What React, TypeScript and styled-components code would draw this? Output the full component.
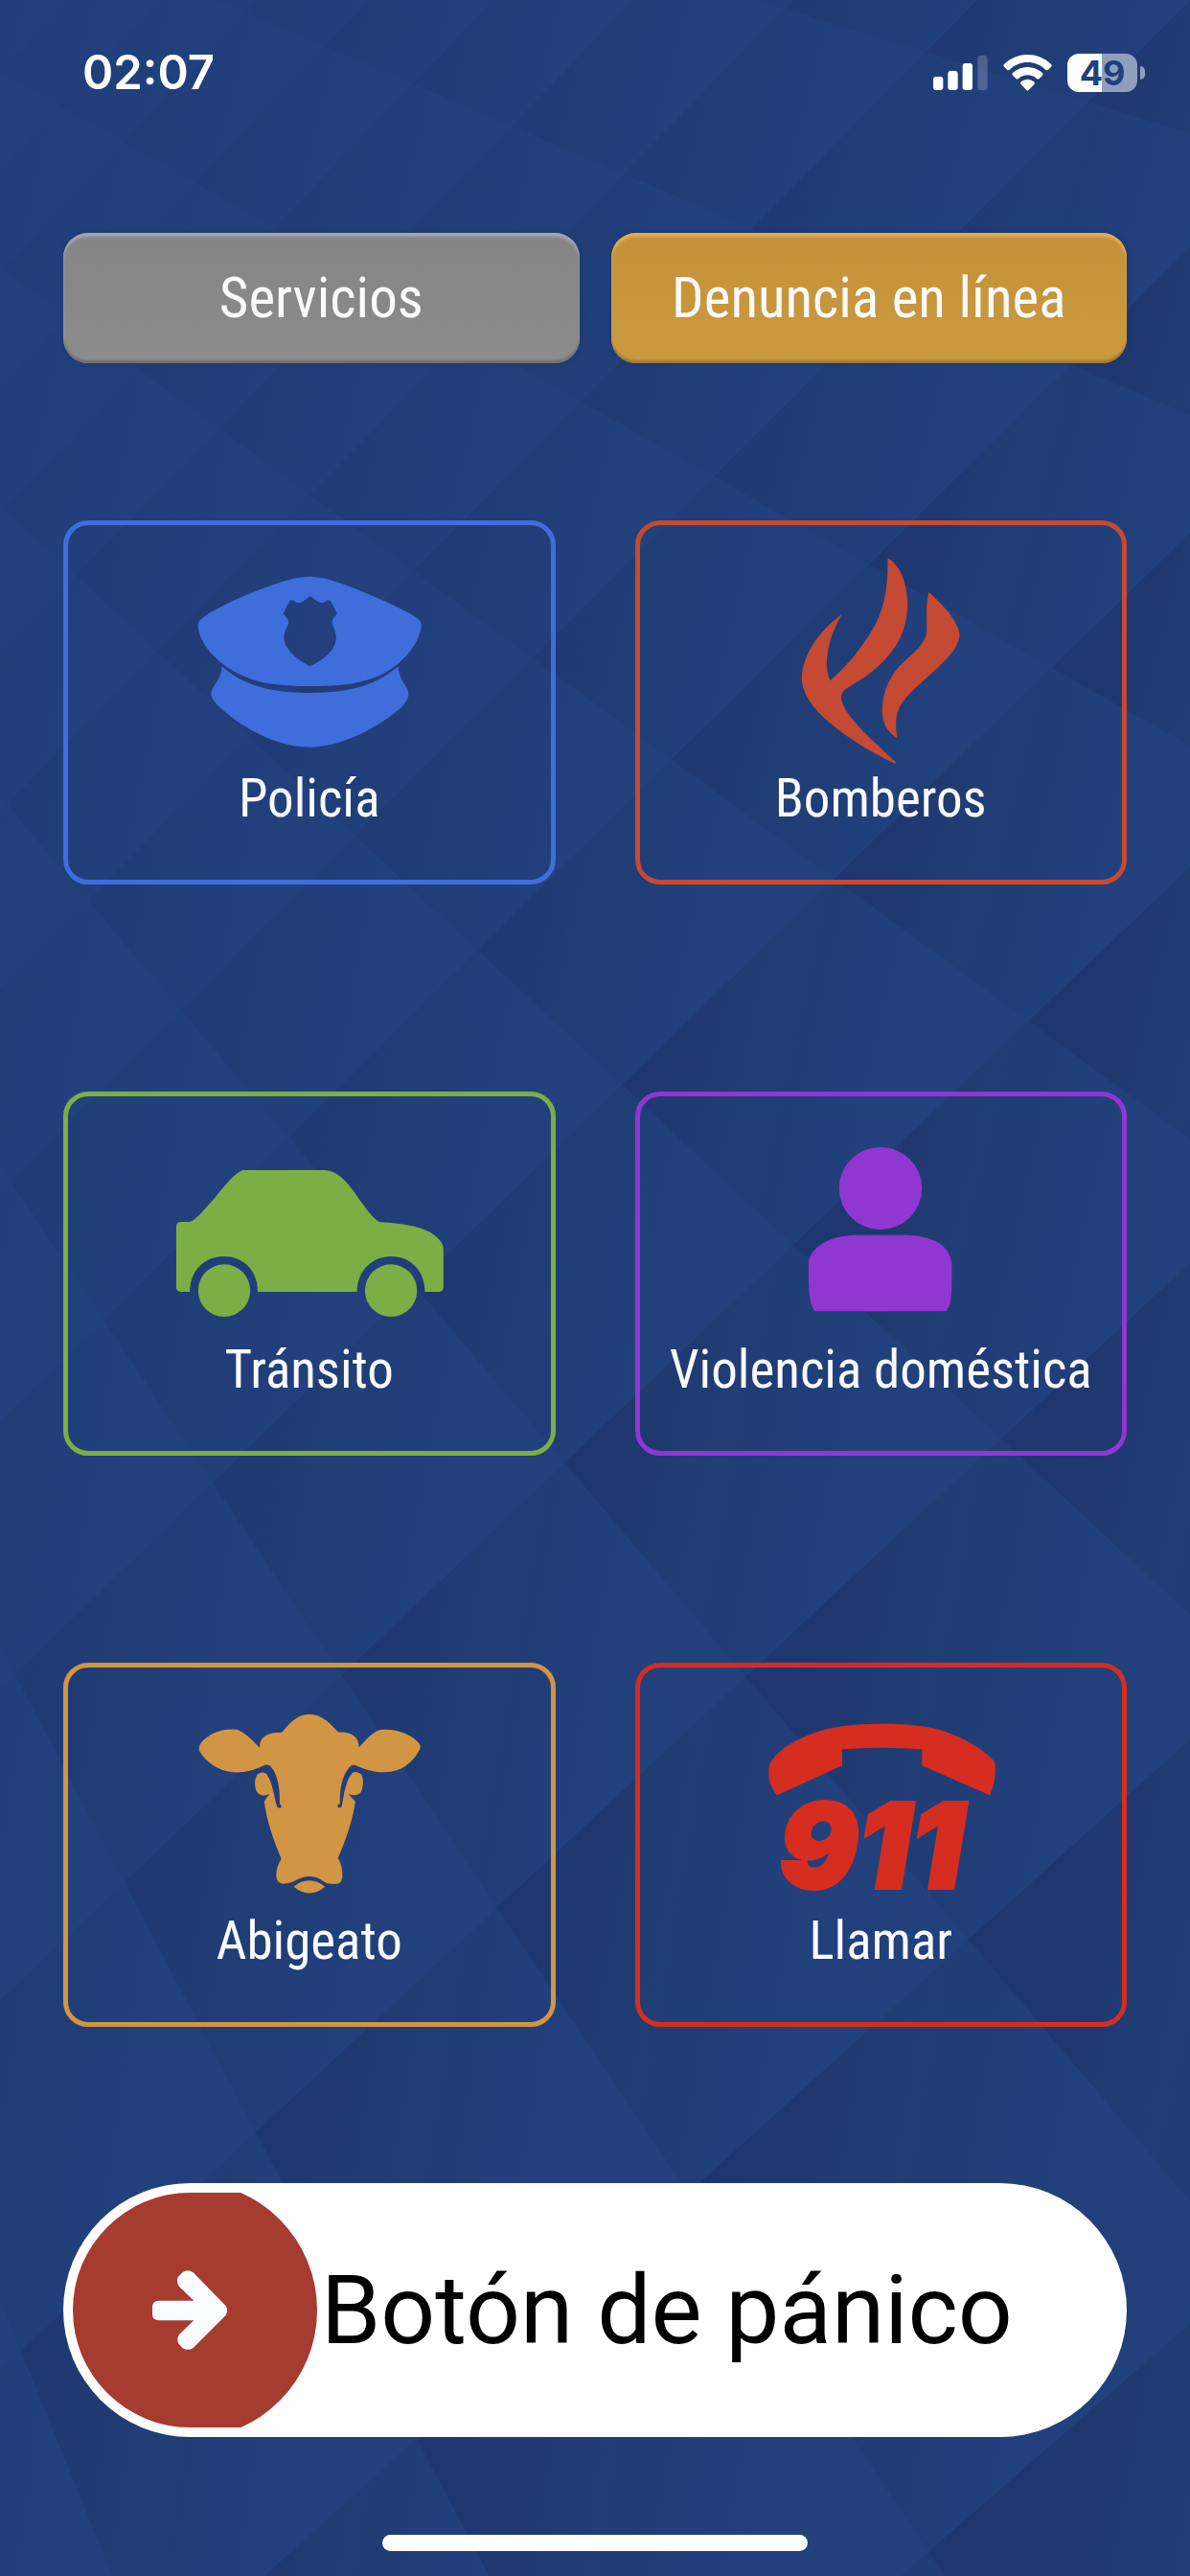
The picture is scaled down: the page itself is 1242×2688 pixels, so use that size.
import React from "react";
import styled, { createGlobalStyle } from "styled-components";

const Global = createGlobalStyle`
  *, *::before, *::after { box-sizing: border-box; }
  body { margin: 0; background: #21407c; }
  button { font: inherit; border: 0; margin: 0; padding: 0; cursor: pointer; }
`;

const Screen = styled.div`
  position: relative;
  isolation: isolate;
  min-height: 100vh;
  display: flex;
  flex-direction: column;
  font-family: "Roboto Condensed", Roboto, "Liberation Sans", sans-serif;
  overflow: hidden;
`;

const Backdrop = styled.svg`
  position: absolute;
  inset: 0;
  width: 100%;
  height: 100%;
  z-index: -1;
`;

const StatusBar = styled.header`
  height: 152px;
  padding: 0 47px 0 86px;
  display: flex;
  align-items: center;
  justify-content: space-between;
  color: #fff;
  font-family: Inter, "Liberation Sans", sans-serif;
`;

const Clock = styled.time`
  font-size: 49px;
  line-height: 60px;
  font-weight: 600;
`;

const StatusIcons = styled.div`
  display: flex;
  align-items: center;
  gap: 16px;
`;

const Battery = styled.div`
  display: flex;
  align-items: center;
  gap: 3px;
`;

const BatteryBody = styled.div<{ $level: number }>`
  width: 73px;
  height: 40px;
  border-radius: 12px;
  background: linear-gradient(
    to right,
    #fff ${(p) => p.$level}%,
    #909fbe ${(p) => p.$level}%
  );
  color: #21407c;
  font-size: 36px;
  line-height: 40px;
  font-weight: 700;
  text-align: center;
`;

const BatteryTip = styled.div`
  width: 5px;
  height: 14px;
  border-radius: 0 7px 7px 0;
  background: #909fbe;
`;

const Main = styled.main`
  flex: 1;
  padding: 91px 66px 0;
  display: flex;
  flex-direction: column;
`;

const Tabs = styled.nav`
  display: grid;
  grid-template-columns: 1fr 1fr;
  gap: 33px;
`;

const Tab = styled.button<{ $tone: "gray" | "gold" }>`
  height: 136px;
  border-radius: 26px;
  color: #fafafa;
  font-size: 59px;
  line-height: 72px;
  background: ${(p) =>
    p.$tone === "gray"
      ? "linear-gradient(#848484, #8c8c8c)"
      : "linear-gradient(#c39139, #ca9a40)"};
  box-shadow:
    inset 0 4px 3px ${(p) => (p.$tone === "gray" ? "#a5a5ac" : "#e2ad57")},
    inset 0 -3px 2px ${(p) => (p.$tone === "gray" ? "#717171" : "#a17a35")},
    0 0 5px #1d3768;
`;

const Grid = styled.section`
  margin-top: 164px;
  display: grid;
  grid-template-columns: 1fr 1fr;
  gap: 216px 83px;
`;

const Card = styled.button<{ $color: string }>`
  height: 380px;
  padding-top: 30px;
  border: 5px solid ${(p) => p.$color};
  border-radius: 26px;
  background: transparent;
  color: ${(p) => p.$color};
  display: flex;
  flex-direction: column;
  align-items: center;
  gap: 3px;
`;

const IconBox = styled.span`
  width: 286px;
  height: 220px;
  display: flex;
  flex-direction: column;
  align-items: center;
`;

const Drawing = styled.svg`
  display: block;
  width: 286px;
  fill: currentColor;
`;

const CardLabel = styled.span`
  color: #fafbff;
  font-size: 55px;
  line-height: 64px;
  white-space: nowrap;
`;

const Emergency = styled.span`
  padding-right: 20px;
  font-family: Inter, "Liberation Sans", sans-serif;
  font-size: 122px;
  line-height: 98px;
  font-weight: 900;
  font-style: italic;
  -webkit-text-stroke: 4px currentColor;
`;

const Slider = styled.button`
  margin-top: 163px;
  height: 265px;
  width: 100%;
  padding: 0 10px;
  border-radius: 133px;
  background: #fff;
  color: #000;
  display: flex;
  align-items: center;
  gap: 4px;
`;

const Knob = styled.span`
  width: 255px;
  height: 245px;
  flex: none;
  border-radius: 123px 0 0 123px;
  background: #a63b30;
  clip-path: circle(134px at 121px 50%);
  padding-left: 83px;
  display: flex;
  align-items: center;
`;

const SliderLabel = styled.span`
  font-family: Roboto, "Liberation Sans", sans-serif;
  font-size: 100px;
  line-height: 118px;
  white-space: nowrap;
`;

const HomeBar = styled.footer`
  height: 43px;
  display: flex;
  justify-content: center;
  align-items: flex-start;

  &::before {
    content: "";
    width: 444px;
    height: 17px;
    border-radius: 9px;
    background: #fff;
  }
`;

/* The backdrop is a lattice of tiles seen in perspective. */
const project = (a: number, b: number) => {
  const w = 1 - 0.087 * a - 0.012 * b;
  return [(649 + 107 * a + 211 * b) / w, (1132 + 54 * a - 226 * b) / w];
};

const tiles: { points: string; strength: number }[] = [];
for (let a = -12; a <= 7; a++) {
  for (let b = -10; b <= 10; b++) {
    const corners = [
      project(a, b),
      project(a, b + 1),
      project(a + 1, b + 1),
      project(a + 1, b),
    ];
    const [x, y] = corners[0];
    if (x < -500 || x > 1242 || y < -300 || y > 3200) continue;
    tiles.push({
      points: corners.map((c) => c.map((n) => n.toFixed(1)).join(",")).join(" "),
      strength: Math.min(1, Math.max(0.15, 0.2 + x / 1700 + y / 4000)),
    });
  }
}

const Facets = () => (
  <Backdrop viewBox="0 0 1242 2688" preserveAspectRatio="xMidYMid slice" aria-hidden="true">
    <defs>
      <linearGradient id="facet" x1="0" y1="0.1" x2="1" y2="0.3">
        <stop offset="0" stopColor="#1e356e" />
        <stop offset="0.27" stopColor="#1f3870" />
        <stop offset="0.34" stopColor="#203c72" />
        <stop offset="0.42" stopColor="#203d75" />
        <stop offset="0.5" stopColor="#203c76" />
        <stop offset="0.62" stopColor="#213f7a" />
        <stop offset="0.72" stopColor="#21407c" />
        <stop offset="1" stopColor="#21407c" />
      </linearGradient>
    </defs>
    <rect width="1242" height="2688" fill="#21407c" />
    {tiles.map((t) => (
      <polygon key={t.points} points={t.points} fill="url(#facet)" opacity={t.strength} />
    ))}
  </Backdrop>
);

const Signal = () => (
  <svg width="57" height="36" viewBox="0 0 171 108" fill="#fff" aria-hidden="true">
    <rect x="0" y="66" width="31" height="42" rx="9" />
    <rect x="46" y="48" width="31" height="60" rx="9" />
    <rect x="92" y="24" width="31" height="84" rx="9" />
    <rect x="139" y="0" width="31" height="108" rx="9" opacity="0.2" />
  </svg>
);

const Wifi = () => (
  <svg width="51" height="38" viewBox="0 0 153 114" fill="#fff" aria-hidden="true">
    <path d="M3 30C45-10 109-10 150 30Q154 34 150 38L141 47Q137 50 133 47C101 16 52 16 20 47Q16 50 12 47L3 38Q-1 34 3 30Z" />
    <path d="M30 57C56 33 97 33 123 57Q127 61 123 65L113 75Q109 78 105 75C88 60 65 60 48 75Q44 78 40 75L30 65Q26 61 30 57Z" />
    <path d="M56 85Q76 70 97 85Q101 89 97 93L80 111Q76 114 73 111L56 93Q52 89 56 85Z" />
  </svg>
);

const PoliceCap = () => (
  <Drawing height="220" viewBox="364 144 800 660" preserveAspectRatio="none" aria-hidden="true">
    <path
      fillRule="evenodd"
      d="M764 215C800 215 835 228 868 241C940 270 1018 307 1062 334C1078 344 1091 354 1091 368C1085 420 1052 461 1018 492C955 545 880 558 765 558C650 558 585 545 515 492C478 460 443 420 438 368C438 352 455 341 472 329C520 299 590 265 661 239C695 227 728 215 764 215ZM766 276L744 293Q728 302 718 290Q712 286 705 293C697 306 694 318 687 330L702 350Q705 362 697 376C685 400 689 420 699 437C715 465 740 480 766 496C795 480 820 462 834 437C844 416 844 398 835 376Q827 360 831 350L845 330C838 318 834 306 827 293Q820 286 814 290Q803 302 788 293Z"
    />
    <path d="M508 496C575 560 660 579 765 579C870 579 950 562 1023 496Q1025 525 1037 546Q1054 568 1053 588C1050 606 1034 625 1010 644C945 697 850 749 765 749C680 749 590 702 524 644C499 622 481 606 477 586C476 568 488 554 497 539Q508 518 508 496Z" />
  </Drawing>
);

const Flame = () => (
  <Drawing height="220" viewBox="382 144 800 660" preserveAspectRatio="none" aria-hidden="true">
    <path d="M806 158C845 187 861 245 861 305C858 385 832 430 795 475C760 516 715 545 682 566Q667 577 667 595C674 650 750 720 828 797Q826 801 821 799C740 757 665 706 615 655C572 610 552 570 552 530C556 460 598 390 669 333C635 395 625 450 625 492Q627 525 635 541C685 495 728 437 758 382C787 330 804 270 803 160Z" />
    <path d="M923 263C960 300 987 331 1001 359Q1012 380 1013 400C1009 436 982 468 940 509C905 543 864 579 845 610C823 645 826 680 830 719C803 704 791 680 787 642C786 590 802 540 832 502C862 465 911 437 917 388C918 345 913 305 923 263Z" />
  </Drawing>
);

const Car = () => (
  <Drawing height="220" viewBox="364 161 800 660" preserveAspectRatio="none" aria-hidden="true">
    <path d="M388 464H412C430 462 452 430 486 391C515 353 545 310 570 302H810C843 304 872 335 899 377C925 417 950 456 970 465C1040 469 1104 480 1136 512Q1155 530 1155 551V669Q1155 683 1141 683H1101C1101 615 1057 572 1003 572C949 572 903 615 903 683H613C613 615 569 572 514 572C459 572 415 615 415 683H388Q375 682 375 669V478Q375 465 388 464Z" />
    <ellipse cx="515" cy="679" rx="76" ry="82" />
    <ellipse cx="1002" cy="679" rx="76" ry="82" />
  </Drawing>
);

const Person = () => (
  <Drawing height="220" viewBox="382 161 800 660" preserveAspectRatio="none" aria-hidden="true">
    <ellipse cx="782" cy="359" rx="121" ry="129" />
    <path d="M705 505H855C940 507 985 540 990 594V650C989 700 989 724 973 744H590C575 720 573 690 572 640V590C578 545 630 508 705 505Z" />
  </Drawing>
);

const Cow = () => (
  <Drawing height="220" viewBox="364 151 800 660" preserveAspectRatio="none" aria-hidden="true">
    <path d="M764 207C802 207 828 240 849 264C886 261 909 278 908 311C930 288 946 264 970 256C1020 250 1069 273 1087 303Q1090 315 1082 325C1062 362 1030 388 985 389C948 390 920 377 898 367Q887 363 880 374C857 405 852 445 853 487Q845 489 846 496Q850 504 858 497C864 465 868 415 890 390Q903 384 916 396Q925 420 916 448Q904 468 877 457Q887 468 898 481C889 545 867 610 847 657Q861 680 860 718Q857 739 842 738H826C803 738 800 716 764 715C730 715 722 738 686 738Q667 735 667 711Q668 681 682 660C661 608 640 545 632 481Q637 469 648 457Q620 469 609 447Q599 420 611 396Q628 384 639 395C658 425 660 465 669 496Q675 504 682 498Q681 489 677 487C678 448 674 397 650 370Q640 362 628 369C604 381 580 391 540 389C495 384 462 356 444 325Q438 311 447 297C467 270 505 250 552 255C577 265 597 288 619 312C616 278 642 263 683 264C702 240 726 207 764 207Z" />
    <path d="M718 747C747 722 779 721 809 747C781 774 748 774 718 747Z" />
  </Drawing>
);

const Handset = () => (
  <Drawing height="107" viewBox="382 151 800 321" preserveAspectRatio="none" aria-hidden="true">
    <path d="M785 237C850 237 895 241 935 251C1010 270 1080 315 1113 353C1123 376 1116 425 1101 461L903 368V317Q785 307 670 317V368L480 461C460 437 451 405 457 370C469 330 520 292 590 265C640 245 705 237 785 237Z" />
  </Drawing>
);

const Arrow = () => (
  <svg width="78" height="83" viewBox="297 294 234 249" fill="#fafcff" aria-hidden="true">
    <path d="M315 389H427L381 345Q371 332 377 315L392 300Q408 289 424 300L526 404Q537 420 526 436L424 538Q408 547 392 538L380 525Q371 510 381 495L427 451H315Q298 449 297 433V407Q298 391 315 389Z" />
  </svg>
);

const services = [
  { name: "Policía", color: "#406ddc", icon: <PoliceCap /> },
  { name: "Bomberos", color: "#c54a33", icon: <Flame /> },
  { name: "Tránsito", color: "#7cae46", icon: <Car /> },
  { name: "Violencia doméstica", color: "#8f37d0", icon: <Person /> },
  { name: "Abigeato", color: "#d29544", icon: <Cow /> },
  {
    name: "Llamar",
    color: "#d52d1f",
    icon: (
      <>
        <Handset />
        <Emergency>911</Emergency>
      </>
    ),
  },
];

export default function App() {
  return (
    <Screen>
      <Global />
      <Facets />
      <StatusBar>
        <Clock>02:07</Clock>
        <StatusIcons>
          <Signal />
          <Wifi />
          <Battery>
            <BatteryBody $level={49}>49</BatteryBody>
            <BatteryTip />
          </Battery>
        </StatusIcons>
      </StatusBar>
      <Main>
        <Tabs>
          <Tab $tone="gray">Servicios</Tab>
          <Tab $tone="gold">Denuncia en línea</Tab>
        </Tabs>
        <Grid>
          {services.map((s) => (
            <Card key={s.name} $color={s.color}>
              <IconBox>{s.icon}</IconBox>
              <CardLabel>{s.name}</CardLabel>
            </Card>
          ))}
        </Grid>
        <Slider>
          <Knob>
            <Arrow />
          </Knob>
          <SliderLabel>Botón de pánico</SliderLabel>
        </Slider>
      </Main>
      <HomeBar />
    </Screen>
  );
}
